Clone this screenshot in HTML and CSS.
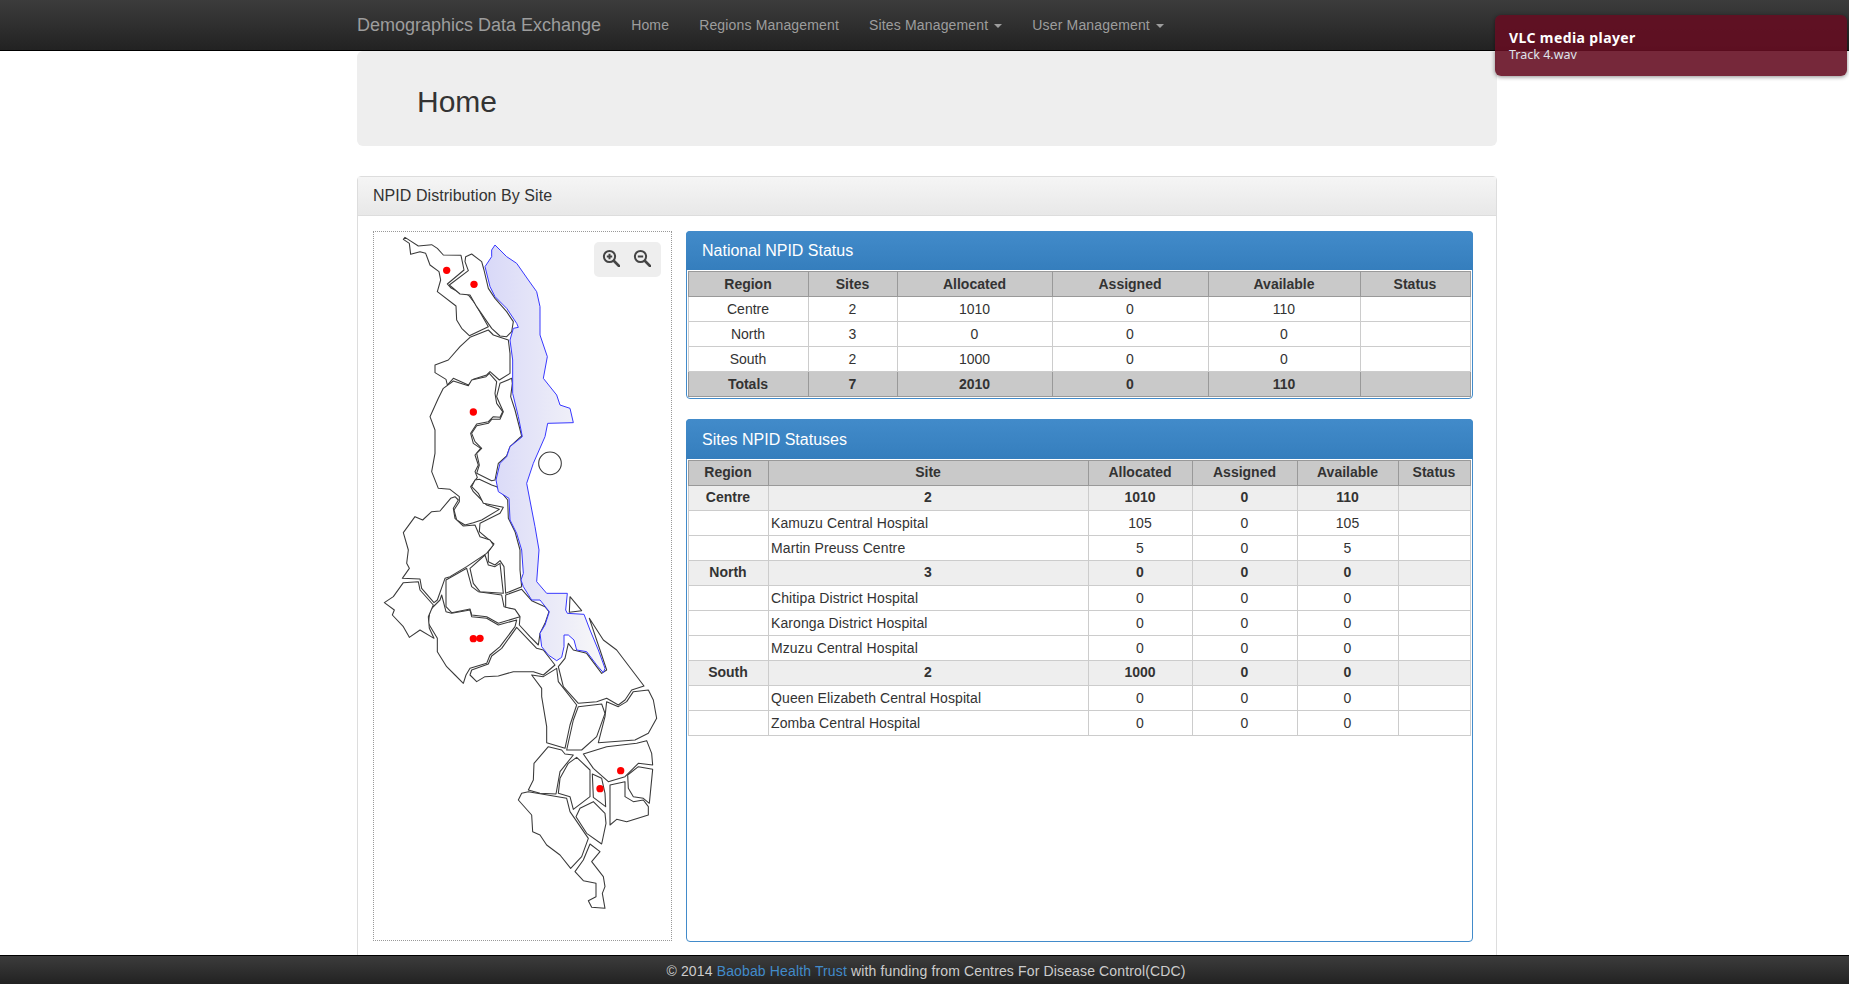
FILE: index.html
```html
<!DOCTYPE html>
<html lang="en">
<head>
  <meta charset="UTF-8" />
  <title>Demographics Data Exchange</title>
  <link rel="stylesheet" href="styles.css">
</head>
<body>
  <nav class="navbar">
    <a class="brand" href="#">Demographics Data Exchange</a>
    <a class="nav-link" href="#">Home</a>
    <a class="nav-link" href="#">Regions Management</a>
    <a class="nav-link" href="#">Sites Management <span class="caret"></span></a>
    <a class="nav-link" href="#">User Management <span class="caret"></span></a>
  </nav>

  <div class="toast">
    <strong>VLC media player</strong>
    <span>Track 4.wav</span>
  </div>

  <main class="page">
    <div class="container">
      <section class="jumbotron">
        <h2>Home</h2>
      </section>

      <section class="panel">
        <div class="panel-heading">NPID Distribution By Site</div>
        <div class="panel-body">
          <div class="map">
            <div class="zoom-controls">
              <svg class="zoom-icon" viewBox="0 0 18 18">
                <circle cx="7.5" cy="7.5" r="5.6"/>
                <path d="M12 12l5 5" class="handle"/>
                <path d="M4.8 7.5h5.4M7.5 4.8v5.4"/>
              </svg>
              <svg class="zoom-icon" viewBox="0 0 18 18">
                <circle cx="7.5" cy="7.5" r="5.6"/>
                <path d="M12 12l5 5" class="handle"/>
                <path d="M4.8 7.5h5.4"/>
              </svg>
            </div>
            <svg class="map-svg" viewBox="42 36 894 2127">
              <defs>
                <linearGradient id="lake-fill" gradientUnits="userSpaceOnUse" x1="375" y1="0" x2="735" y2="0">
                  <stop offset="0" stop-color="#d8d8f8"/>
                  <stop offset="1" stop-color="#f8f8f8"/>
                </linearGradient>
              </defs>
              <g class="districts">
                <path d="M130 58L135 52 150 62 175 78 215 74 232 85 250 105 303 106 312 150 262 192 272 203 295 215 325 225 345 250 385 320 328 347 305 325 290 300 288 258 232 215 242 180 237 155 210 135 197 100 180 95 152 103 148 70Z"/>
                <path d="M317 110L335 102 365 125 372 150 385 205 405 235 440 275 460 305 455 335 440 350 420 348 395 325 350 260 330 225 300 222 268 195 325 152 315 125Z"/>
                <path d="M385 330L330 352 300 380 265 420 225 435 225 458 258 478 262 495 280 475 325 495 340 478 380 465 390 455 418 480 450 460 450 400 445 360 420 352 400 345Z"/>
                <path d="M250 505L280 483 325 497 335 480 378 470 388 460 410 485 405 520 410 550 428 575 420 592 400 590 385 605 350 612 332 640 340 670 362 685 345 705 355 735 345 755 352 772 332 800 340 815 365 840 380 855 418 868 365 900 340 908 315 915 290 900 282 870 298 845 298 830 270 808 235 805 215 755 225 700 225 630 210 590 235 535Z"/>
                <path d="M455 475L420 490 410 530 430 575 420 598 395 598 385 610 350 617 335 640 345 665 365 685 350 700 358 735 350 760 395 782 405 780 415 730 440 708 450 680 485 648 465 570 452 530 457 490Z"/>
                <path d="M345 780L335 800 355 820 370 850 430 862 420 880 360 910 358 935 402 972 385 995 385 1025 405 1035 420 1022 432 1040 437 1120 485 1100 480 1050 480 990 465 935 445 895 443 840 410 800 395 795 358 778Z"/>
                <path d="M130 938L165 890 188 900 215 875 240 873 272 835 285 830 295 840 280 865 285 895 310 918 345 915 360 950 390 960 400 975 380 1000 320 1040 270 1070 255 1075 232 1140 222 1148 185 1105 180 1077 127 1075 148 1045 140 1030 145 990Z"/>
              </g>
              <g class="districts south" transform="translate(0 990)">
                <path d="M320 55L335 110 355 125 425 135 432 170 470 178 480 200 415 220 380 200 335 195 330 177 275 188 258 170 258 90Z"/>
                <path d="M375 15L385 45 405 50 420 40 430 130 360 125 340 100 330 55Z"/>
                <path d="M245 135L258 185 275 190 330 180 335 200 380 205 415 225 470 210 465 230 420 290 390 315 380 340 330 355 318 375 310 400 285 375 260 350 232 305 232 265 205 220 210 180 240 150Z"/>
                <path d="M130 98L175 95 180 120 220 165 205 200 208 235 222 265 180 240 148 262 130 230 97 195 103 180 73 158 100 140Z"/>
                <path d="M437 135L485 118 515 152 555 170 567 185 555 220 540 250 535 285 510 260 478 225 480 200 465 178 437 172Z"/>
                <path d="M470 232L530 295 550 300 585 345 550 375 520 365 460 365 415 378 375 380 350 395 330 375 335 360 385 342 395 318 425 295Z"/>
                <path d="M688 205L730 270 770 300 852 408 815 420 795 450 775 465 740 445 710 455 655 460 610 410 595 350 615 325 625 280 640 300 680 310 725 370 740 360 720 300Z"/>
                <path d="M630 140L665 182 628 187Z"/>
                <path d="M515 375L550 380 590 355 595 395 650 465 630 525 615 595 560 578 560 530 545 440 545 415Z"/>
                <path d="M655 470L725 462 735 490 710 560 665 600 620 600 640 510Z"/>
                <path d="M740 455L775 470 800 455 820 425 865 420 880 450 890 505 865 550 825 570 715 578 735 500Z"/>
                <path d="M860 572L875 610 878 645 835 640 795 680 745 695 700 655 670 612 740 590 830 580Z"/>
                <path d="M878 658L868 760 850 745 820 740 805 715 803 675 835 650Z"/>
                <path d="M795 695L795 740 820 755 850 750 865 770 865 795 800 815 770 808 750 825 750 705Z"/>
                <path d="M697 672L725 685 735 730 737 770 700 742Z"/>
                <path d="M650 622L690 660 690 740 640 778 630 740 595 730 600 685 625 640Z"/>
                <path d="M565 590L605 600 615 612 640 615 600 665 588 732 540 730 505 720 520 690 522 640Z"/>
                <path d="M485 730L505 725 620 745 630 785 685 865 665 920 632 955 600 915 560 885 540 855 518 845 515 795 475 750Z"/>
                <path d="M700 755L735 790 738 820 725 882 680 850 648 800 660 775Z"/>
                <path d="M690 882L720 905 695 935 730 980 735 1010 727 1030 735 1075 695 1072 685 1052 708 1040 708 1000 670 992 645 965 670 930Z"/>
              </g>
              <path class="lake" d="M405 75L395 90 395 110 375 140 390 200 405 230 440 265 470 310 475 322 460 325 450 360 458 420 458 520 475 590 487 650 450 680 440 710 420 730 408 780 415 815 447 835 450 900 470 940 485 990 490 1060 483 1080 490 1100 515 1140 540 1140 568 1175 555 1215 540 1240 545 1280 565 1305 590 1322 605 1312 612 1280 612 1245 625 1245 642 1260 650 1290 680 1295 710 1335 730 1358 735 1345 715 1290 690 1230 672 1183 622 1180 617 1170 622 1120 560 1120 530 1085 537 990 525 920 500 790 520 730 555 650 563 610 640 608 630 565 600 555 590 525 550 475 562 410 540 345 540 260 530 215 505 180 470 130 440 110Z"/>
              <circle class="island" cx="570" cy="730" r="34"/>
              <g class="sites">
                <circle cx="260" cy="151" r="11"/>
                <circle cx="342" cy="193" r="11"/>
                <circle cx="340" cy="576" r="11"/>
                <circle cx="340" cy="1256" r="11"/>
                <circle cx="360" cy="1255" r="11"/>
                <circle cx="782" cy="1652" r="11"/>
                <circle cx="720" cy="1706" r="11"/>
              </g>
            </svg>
          </div>

          <div class="status-col">
            <div class="status-panel national">
              <div class="status-title">National NPID Status</div>
              <table class="status-table">
                <colgroup>
                  <col class="n-region"><col class="n-sites"><col class="n-alloc"><col class="n-assign"><col class="n-avail"><col class="n-status">
                </colgroup>
                <tr><th>Region</th><th>Sites</th><th>Allocated</th><th>Assigned</th><th>Available</th><th>Status</th></tr>
                <tr><td>Centre</td><td>2</td><td>1010</td><td>0</td><td>110</td><td></td></tr>
                <tr><td>North</td><td>3</td><td>0</td><td>0</td><td>0</td><td></td></tr>
                <tr><td>South</td><td>2</td><td>1000</td><td>0</td><td>0</td><td></td></tr>
                <tr class="totals"><th>Totals</th><th>7</th><th>2010</th><th>0</th><th>110</th><th></th></tr>
              </table>
            </div>

            <div class="status-panel sites-panel">
              <div class="status-title">Sites NPID Statuses</div>
              <table class="status-table">
                <colgroup>
                  <col class="s-region"><col class="s-site"><col class="s-alloc"><col class="s-assign"><col class="s-avail"><col class="s-status">
                </colgroup>
                <tr><th>Region</th><th>Site</th><th>Allocated</th><th>Assigned</th><th>Available</th><th>Status</th></tr>
                <tr class="group"><td>Centre</td><td>2</td><td>1010</td><td>0</td><td>110</td><td></td></tr>
                <tr><td></td><td class="site-name">Kamuzu Central Hospital</td><td>105</td><td>0</td><td>105</td><td></td></tr>
                <tr><td></td><td class="site-name">Martin Preuss Centre</td><td>5</td><td>0</td><td>5</td><td></td></tr>
                <tr class="group"><td>North</td><td>3</td><td>0</td><td>0</td><td>0</td><td></td></tr>
                <tr><td></td><td class="site-name">Chitipa District Hospital</td><td>0</td><td>0</td><td>0</td><td></td></tr>
                <tr><td></td><td class="site-name">Karonga District Hospital</td><td>0</td><td>0</td><td>0</td><td></td></tr>
                <tr><td></td><td class="site-name">Mzuzu Central Hospital</td><td>0</td><td>0</td><td>0</td><td></td></tr>
                <tr class="group"><td>South</td><td>2</td><td>1000</td><td>0</td><td>0</td><td></td></tr>
                <tr><td></td><td class="site-name">Queen Elizabeth Central Hospital</td><td>0</td><td>0</td><td>0</td><td></td></tr>
                <tr><td></td><td class="site-name">Zomba Central Hospital</td><td>0</td><td>0</td><td>0</td><td></td></tr>
              </table>
            </div>
          </div>
        </div>
      </section>
    </div>
  </main>

  <footer class="footer">
    &copy; 2014 <a href="#">Baobab Health Trust</a> with funding from Centres For Disease Control(CDC)
  </footer>
</body>
</html>
```

FILE: styles.css
```css
html, body {
  height: 100%;
}

body {
  margin: 0;
  display: flex;
  flex-direction: column;
  overflow: hidden;
  font-family: "Liberation Sans", Arial, sans-serif;
  font-size: 14px;
  color: #333;
  background: #fff;
}

a {
  text-decoration: none;
}

.navbar {
  flex: none;
  box-sizing: border-box;
  height: 51px;
  padding-left: 357px;
  display: flex;
  align-items: center;
  background: linear-gradient(to bottom, #3c3c3c, #222);
  border-bottom: 1px solid #000;
}

.brand {
  font-size: 18px;
  color: #9d9d9d;
  margin-right: 30px;
}

.nav-link {
  color: #9d9d9d;
  margin-right: 30px;
  letter-spacing: 0.16px;
}

.caret {
  display: inline-block;
  margin-left: 2px;
  vertical-align: middle;
  border-top: 4px solid #9d9d9d;
  border-left: 4px solid transparent;
  border-right: 4px solid transparent;
}

.toast {
  position: absolute;
  top: 15px;
  right: 2px;
  box-sizing: border-box;
  width: 352px;
  height: 61px;
  padding: 14px 14px 0;
  display: flex;
  flex-direction: column;
  font-family: "Noto Sans", sans-serif;
  font-size: 12.5px;
  line-height: 17px;
  color: #dfe3ea;
  background: rgba(101, 13, 34, 0.89);
  border-radius: 6px;
  box-shadow: 0 1px 4px rgba(0, 0, 0, 0.45);
}

.toast strong {
  font-size: 14px;
  letter-spacing: 0.4px;
  color: #fff;
}

.page {
  flex: 1;
  min-height: 0;
  overflow: hidden;
}

.container {
  width: 1140px;
  margin-left: 357px;
}

.jumbotron {
  box-sizing: border-box;
  height: 95px;
  padding: 34px 60px 0;
  margin-bottom: 30px;
  background: #eee;
  border-radius: 6px;
}

.jumbotron h2 {
  margin: 0;
  font-size: 30px;
  font-weight: normal;
  line-height: 33px;
}

.panel {
  border: 1px solid #ddd;
  border-radius: 4px;
}

.panel-heading {
  box-sizing: border-box;
  height: 39px;
  padding: 0 15px;
  font-size: 16px;
  line-height: 37px;
  letter-spacing: 0.05px;
  background: linear-gradient(to bottom, #f5f5f5, #e8e8e8);
  border-bottom: 1px solid #ddd;
}

.panel-body {
  display: flex;
  gap: 14px;
  padding: 15px 24px 16px 15px;
}

.map {
  position: relative;
  box-sizing: border-box;
  flex: none;
  width: 299px;
  height: 710px;
  border: 1px dotted #999;
}

.map-svg {
  display: block;
  width: 298px;
  height: 709px;
}

.lake {
  fill: url(#lake-fill);
  stroke: #3838ff;
  stroke-width: 3;
  stroke-linejoin: round;
}

.districts path, .island {
  fill: #fff;
  stroke: #3a3a3a;
  stroke-width: 3.2;
  stroke-linejoin: round;
}

.sites circle {
  fill: #f00;
}

.zoom-controls {
  position: absolute;
  top: 10px;
  right: 10px;
  box-sizing: border-box;
  width: 67px;
  height: 35px;
  padding: 0 2px 3px 0;
  display: flex;
  justify-content: center;
  align-items: center;
  gap: 13px;
  background: #eee;
  border-radius: 5px;
}

.zoom-icon {
  width: 18px;
  height: 18px;
  fill: none;
  stroke: #444;
  stroke-width: 2;
}

.zoom-icon .handle {
  stroke-width: 2.6;
  stroke-linecap: round;
}

.status-col {
  flex: 1;
  display: flex;
  flex-direction: column;
  gap: 20px;
}

.status-panel {
  box-sizing: border-box;
  padding: 0 1px 1px;
  border: 1px solid #428bca;
  border-radius: 4px;
}

.sites-panel {
  height: 523px;
}

.status-title {
  box-sizing: border-box;
  height: 39px;
  margin: -1px -2px 1px;
  padding: 0 16px;
  font-size: 16px;
  line-height: 39px;
  color: #fff;
  background: linear-gradient(to bottom, #428bca, #357ebd);
  border-radius: 4px 4px 0 0;
}

.sites-panel .status-title {
  height: 40px;
  line-height: 41px;
}

.status-table {
  width: 782px;
  table-layout: fixed;
  border-collapse: collapse;
  text-align: center;
}

.status-table th, .status-table td {
  box-sizing: border-box;
  height: 25px;
  padding: 0 3px 0 2px;
  line-height: 20px;
}

.status-table td {
  border: 1px solid #ccc;
}

.status-table th {
  border: 1px solid #999;
  background: #c9c9c9;
}

.totals th {
  border-top: 0;
}

.sites-panel th, .group td {
  padding-bottom: 2px;
}

.group td {
  font-weight: bold;
  background: #eee;
}

.status-table .site-name {
  text-align: left;
  letter-spacing: 0.1px;
}

.n-region { width: 120px; }
.n-sites { width: 89px; }
.n-alloc { width: 155px; }
.n-assign { width: 156px; }
.n-avail { width: 152px; }
.n-status { width: 110px; }

.s-region { width: 80px; }
.s-site { width: 320px; }
.s-alloc { width: 104px; }
.s-assign { width: 105px; }
.s-avail { width: 101px; }
.s-status { width: 72px; }

.footer {
  flex: none;
  box-sizing: border-box;
  height: 29px;
  line-height: 30px;
  text-align: center;
  padding-left: 3px;
  letter-spacing: 0.14px;
  color: #ccc;
  background: linear-gradient(to bottom, #3c3c3c, #222);
  border-top: 1px solid #000;
}

.footer a {
  color: #428bca;
}
```
